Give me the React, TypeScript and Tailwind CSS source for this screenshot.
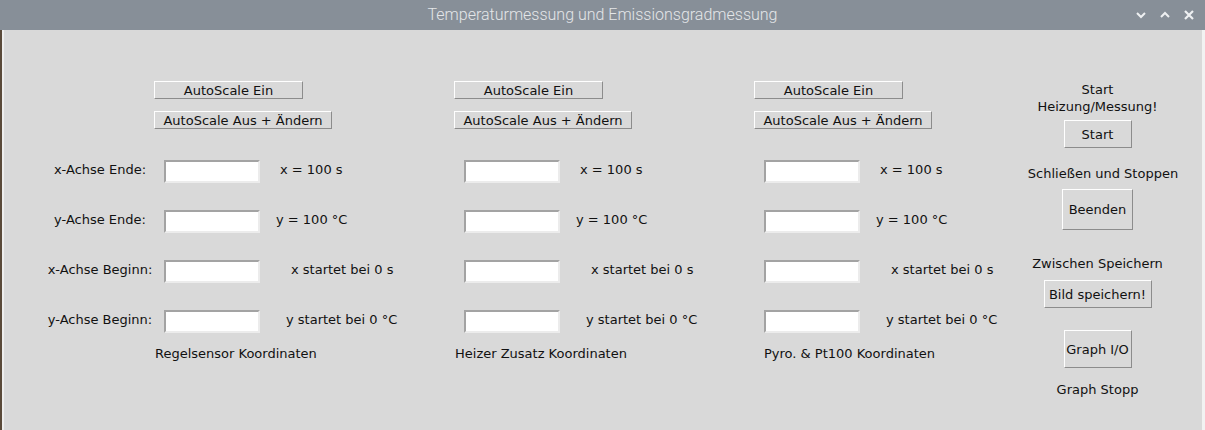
import React from 'react';

const font = "font-['DejaVu_Sans',sans-serif]";

type Row = { label: string; value: string; gap: string };

const rows: Row[] = [
  { label: 'x-Achse Ende:', value: 'x = 100 s', gap: 'ml-[20px]' },
  { label: 'y-Achse Ende:', value: 'y = 100 °C', gap: 'ml-[16px]' },
  { label: 'x-Achse Beginn:', value: 'x startet bei 0 s', gap: 'ml-[31px]' },
  { label: 'y-Achse Beginn:', value: 'y startet bei 0 °C', gap: 'ml-[26px]' },
];

// Tk "raised" button
const TkButton = ({ children, className = '' }: { children: React.ReactNode; className?: string }) => (
  <button
    className={`shrink-0 flex items-center justify-center bg-[#d9d9d9] text-[13px] leading-none text-[#111] border border-t-white border-l-white border-r-[#8c8c8c] border-b-[#8c8c8c] ${className}`}
  >
    {children}
  </button>
);

const Entry = () => (
  <input
    className="w-[96px] h-[23px] bg-white outline-none border-2 border-t-[#a3a3a3] border-l-[#a3a3a3] border-r-[#ececec] border-b-[#ececec]"
  />
);

const AxisColumn = ({ title, titleGap, showLabels }: { title: string; titleGap: string; showLabels: boolean }) => (
  <div className="w-[300px] shrink-0 flex flex-col">
    <TkButton className="ml-[150px] mt-[51px] w-[149px] h-[18px]">AutoScale Ein</TkButton>
    <TkButton className="ml-[150px] mt-[12px] w-[178px] h-[18px]">AutoScale Aus + Ändern</TkButton>
    <div className="mt-[31px] flex flex-col gap-[27px]">
      {rows.map((r) => (
        <div key={r.label} className="flex items-center h-[23px] text-[13px] text-[#111]">
          <span className="shrink-0 ml-[36px] w-[120px] pb-[4px] text-center whitespace-nowrap">
            {showLabels ? r.label : ''}
          </span>
          <div className="shrink-0 ml-[4px]">
            <Entry />
          </div>
          <span className={`${r.gap} shrink-0 pb-[4px] whitespace-nowrap`}>{r.value}</span>
        </div>
      ))}
    </div>
    <span className={`${titleGap} mt-[13px] text-[13px] leading-[15px] text-[#111] whitespace-nowrap`}>{title}</span>
  </div>
);

const Chevron = ({ up }: { up?: boolean }) => (
  <svg width="12" height="12" viewBox="0 0 12 12">
    <path
      d={up ? 'M2 8 L6 4 L10 8' : 'M2 4 L6 8 L10 4'}
      fill="none"
      stroke="#eef0f2"
      strokeWidth="2"
    />
  </svg>
);

export default function App() {
  return (
    <div className={`w-[1205px] h-[430px] overflow-hidden bg-[#d9d9d9] flex flex-col ${font}`}>
      {/* title bar */}
      <div className="h-[30px] shrink-0 bg-[#878f98] relative flex items-center justify-center">
        <span className="text-[16px] font-light text-[#e4e6e8] font-['Roboto',sans-serif]">
          Temperaturmessung und Emissionsgradmessung
        </span>
        <div className="absolute right-[10px] top-[9px] flex items-center gap-[12px]">
          <Chevron />
          <Chevron up />
          <svg width="12" height="12" viewBox="0 0 12 12">
            <path d="M2 2 L10 10 M10 2 L2 10" stroke="#eef0f2" strokeWidth="2.2" />
          </svg>
        </div>
      </div>

      <div className="flex-1 flex border-l-2 border-l-[#5a4a3a] border-r-[3px] border-r-[#f2f2f2]">
        <div className="w-[2px] bg-[#eeeeee]" />
        <div className="flex">
          <AxisColumn title="Regelsensor Koordinaten" titleGap="ml-[151px]" showLabels />
          <AxisColumn title="Heizer Zusatz Koordinaten" titleGap="ml-[151px]" showLabels={false} />
          <AxisColumn title="Pyro. & Pt100 Koordinaten" titleGap="ml-[160px]" showLabels={false} />

          {/* control column */}
          <div className="ml-[106px] w-[175px] shrink-0 flex flex-col items-center text-[13px] text-[#111]">
            <div className="mt-[51px] text-center leading-[17px]">
              Start
              <br />
              Heizung/Messung!
            </div>
            <TkButton className="mt-[5px] w-[68px] h-[28px]">Start</TkButton>
            <span className="mt-[18px] ml-[11px] leading-[15px] whitespace-nowrap">Schließen und Stoppen</span>
            <TkButton className="mt-[8px] w-[71px] h-[41px]">Beenden</TkButton>
            <span className="mt-[26px] leading-[15px] whitespace-nowrap">Zwischen Speichern</span>
            <TkButton className="mt-[9px] w-[108px] h-[28px]">Bild speichern!</TkButton>
            <TkButton className="mt-[22px] w-[68px] h-[38px]">Graph I/O</TkButton>
            <span className="mt-[14px] leading-[15px]">Graph Stopp</span>
          </div>
        </div>
      </div>
    </div>
  );
}
